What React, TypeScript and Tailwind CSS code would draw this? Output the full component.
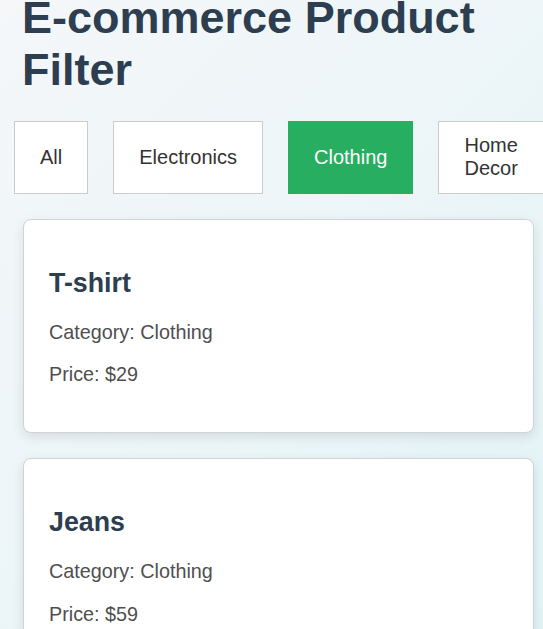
import React, { useState } from "react";

const categories = ["All", "Electronics", "Clothing", "Home Decor"];
const products = [
  { name: "Laptop", category: "Electronics", price: 999 },
  { name: "T-shirt", category: "Clothing", price: 29 },
  { name: "Jeans", category: "Clothing", price: 59 },
  { name: "Lamp", category: "Home Decor", price: 45 },
];

export default function App() {
  const [active, setActive] = useState("Clothing");
  const shown = products.filter((p) => active === "All" || p.category === active);
  return (
    <div
      className="min-h-[629px] w-[543px] overflow-hidden bg-[linear-gradient(135deg,#f5f7f9_0%,#e2f3f6_100%)]"
      style={{ fontFamily: '"Liberation Sans", Arial, sans-serif' }}
    >
      <h1 className="-mt-[8px] pl-[22px] text-[45px] font-bold leading-[1.149] text-[#2c3e50]">
        E-commerce Product Filter
      </h1>
      <div className="mt-[25.5px] flex gap-[25px] pl-[14px] pr-[20px]">
        {categories.map((c) => (
          <button
            key={c}
            onClick={() => setActive(c)}
            className={
              c === active
                ? "shrink border border-[#27ae60] bg-[#27ae60] px-[25px] py-[12.5px] text-[20px] leading-[1.149] text-white"
                : "shrink border border-[#cccccc] bg-white px-[25px] py-[12.5px] text-[20px] leading-[1.149] text-[#333333]"
            }
          >
            {c}
          </button>
        ))}
      </div>
      <div className="mt-[25px] flex flex-col gap-[25.5px] pl-[23px]">
        {shown.map((p) => (
          <div
            key={p.name}
            className="w-[511px] rounded-[8px] border border-[#cfd4d6] bg-white px-[25px] py-[26px] shadow-[0_4px_12px_rgba(0,0,0,0.1)]"
          >
            <h2 className="my-[22px] text-[26.8px] font-bold leading-[1.149] text-[#2c3e50]">{p.name}</h2>
            <p className="my-[19.8px] text-[19.8px] leading-[1.149] text-[#4f4f4f]">Category: {p.category}</p>
            <p className="my-[19.8px] text-[19.8px] leading-[1.149] text-[#4f4f4f]">Price: ${p.price}</p>
          </div>
        ))}
      </div>
    </div>
  );
}
